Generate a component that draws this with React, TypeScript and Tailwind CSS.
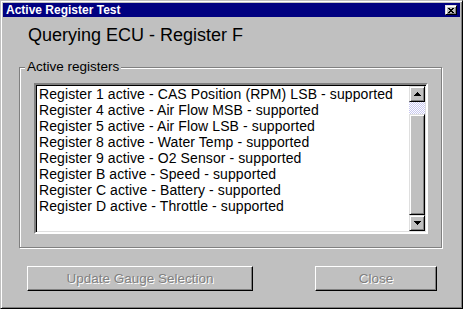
import React from 'react';

const registers = [
  'Register 1 active - CAS Position (RPM) LSB - supported',
  'Register 4 active - Air Flow MSB - supported',
  'Register 5 active - Air Flow LSB - supported',
  'Register 8 active - Water Temp - supported',
  'Register 9 active - O2 Sensor - supported',
  'Register B active - Speed - supported',
  'Register C active - Battery - supported',
  'Register D active - Throttle - supported',
];

const raised =
  'bg-[#c0c0c0] border border-t-[#dfdfdf] border-l-[#dfdfdf] border-r-black border-b-black shadow-[inset_1px_1px_#fff,inset_-1px_-1px_#808080]';

function ScrollArrow({ up }: { up?: boolean }) {
  return (
    <div className={`w-[16px] h-[16px] flex items-center justify-center ${raised}`}>
      <svg width="7" height="4" viewBox="0 0 7 4">
        <path d={up ? 'M3 0h1v1h1v1h1v1h1v1H0V3h1V2h1V1h1z' : 'M0 0h7v1H6v1H5v1H4v1H3V3H2V2H1V1H0z'} fill="#000" />
      </svg>
    </div>
  );
}

function DisabledButton({ label, width }: { label: string; width: string }) {
  return (
    <div
      className={`${width} h-[25px] flex items-center justify-center bg-[#c0c0c0] border border-t-white border-l-white border-r-black border-b-black shadow-[inset_-1px_-1px_#808080] text-[13.5px] leading-[18px] text-[#808080] [text-shadow:1px_1px_#fff]`}
    >
      {label}
    </div>
  );
}

export default function App() {
  return (
    <div
      className="w-[463px] h-[309px] p-[2px] bg-[#c0c0c0] border border-t-[#c0c0c0] border-l-[#c0c0c0] border-r-black border-b-black shadow-[inset_1px_1px_#fff,inset_-1px_-1px_#808080] flex flex-col text-black"
      style={{ fontFamily: '"Liberation Sans", Arial, sans-serif' }}
    >
      {/* Caption */}
      <div className="h-[14px] bg-[#000080] flex items-center justify-between pl-[3px] pr-[3px]">
        <span className="text-white font-bold text-[12px] leading-[14px]">Active Register Test</span>
        <div className={`w-[12px] h-[10px] flex items-center justify-center ${raised}`}>
          <svg width="6" height="5" viewBox="0 0 6 5">
            <path d="M0 0h2v1h2V0h2v1H5v1H4v1h1v1h1v1H4V4H2v1H0V4h1V3h1V2H1V1H0z" fill="#000" />
          </svg>
        </div>
      </div>

      <div className="pl-[25px] pt-[8px] text-[18px] leading-[20px]">Querying ECU - Register F</div>

      {/* Group box */}
      <div className="relative ml-[16px] mt-[22px] w-[423px] h-[181px] border border-[#808080] shadow-[inset_1px_1px_#fff,1px_1px_#fff] pl-[14px] pt-[15px]">
        <span className="absolute left-[5px] top-[-9px] px-[2px] bg-[#c0c0c0] text-[13.5px] leading-[16px]">
          Active registers
        </span>
        <div className="w-[394px] h-[151px] flex bg-white border-2 border-t-[#808080] border-l-[#808080] border-r-white border-b-white shadow-[inset_1px_1px_#000,inset_-1px_-1px_#dfdfdf] p-[1px]">
          <div className="flex-1 pl-[2px] text-[14px] leading-[16px] tracking-[0.1px]">
            {registers.map((r) => (
              <div key={r} className="h-[16px] whitespace-nowrap">
                {r}
              </div>
            ))}
          </div>
          <div className="w-[16px] flex flex-col">
            <ScrollArrow up />
            <div className="h-[12px] bg-[repeating-conic-gradient(#fff_0_25%,#c8c8f0_0_50%)] bg-[length:2px_2px]" />
            <div className={`flex-1 ${raised}`} />
            <ScrollArrow />
          </div>
        </div>
      </div>

      {/* Buttons */}
      <div className="flex pl-[24px] mt-[18px]">
        <DisabledButton label="Update Gauge Selection" width="w-[226px]" />
        <div className="ml-[62px]">
          <DisabledButton label="Close" width="w-[122px]" />
        </div>
      </div>
    </div>
  );
}
